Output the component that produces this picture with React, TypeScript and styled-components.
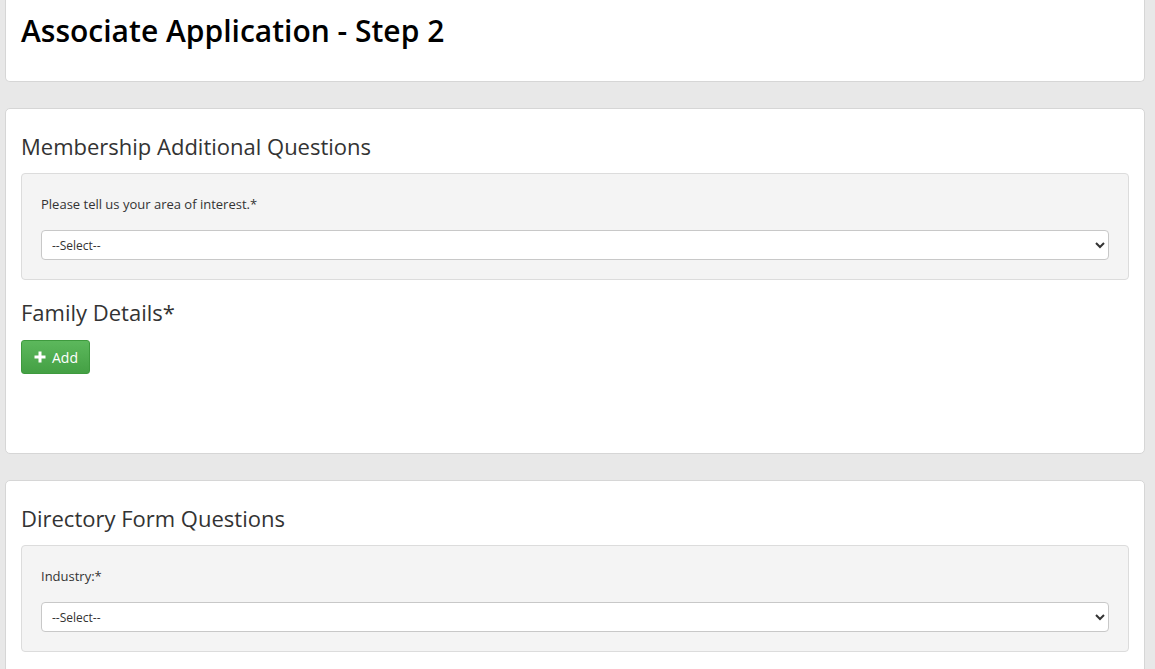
import React from "react";
import styled, { createGlobalStyle } from "styled-components";

const Global = createGlobalStyle`
  html, body { margin: 0; padding: 0; background: #e8e8e8; }
  body { font-family: "Open Sans", "Liberation Sans", sans-serif; color: #333; }
  * { box-sizing: border-box; }
`;

const Page = styled.div`
  display: flex;
  flex-direction: column;
  gap: 26px;
  padding: 0 10px 40px 5px;
`;

const Card = styled.section<{ $top?: boolean }>`
  background: #fff;
  border: 1px solid #d6d6d6;
  border-radius: ${(p) => (p.$top ? "0 0 5px 5px" : "5px")};
  border-top: ${(p) => (p.$top ? "none" : "1px solid #d6d6d6")};
  padding: ${(p) => (p.$top ? "14px 15px 34px" : "25px 15px 15px")};
`;

const Title = styled.h1`
  margin: 0;
  font-size: 30px;
  font-weight: 600;
  line-height: 33px;
  color: #000;
`;

const Heading = styled.h3<{ $gap?: number }>`
  margin: 0 0 ${(p) => p.$gap ?? 15}px;
  font-size: 22px;
  font-weight: 400;
  line-height: 24px;
  color: #333;
`;

const Well = styled.div`
  background: #f4f4f4;
  border: 1px solid #dcdcdc;
  border-radius: 4px;
  padding: 21px 19px 19px;
  margin-bottom: 20px;
`;

const Label = styled.label`
  display: block;
  font-size: 13px;
  line-height: 18px;
  color: #333;
  margin-bottom: 17px;
`;

const Select = styled.select`
  display: block;
  width: 100%;
  height: 30px;
  padding: 0 6px;
  font-family: "Open Sans", "Liberation Sans", sans-serif;
  font-size: 12px;
  color: #333;
  background-color: #fff;
  border: 1px solid #c8c8c8;
  border-radius: 4px;
`;

const AddButton = styled.button`
  display: inline-flex;
  align-items: center;
  gap: 6px;
  height: 34px;
  padding: 0 11px 0 12px;
  font-family: "Open Sans", "Liberation Sans", sans-serif;
  font-size: 14px;
  color: #fff;
  background: linear-gradient(#5cb85c, #44a044);
  border: 1px solid #3e9a3e;
  border-radius: 3px;
  cursor: pointer;
`;

const Spacer = styled.div`
  height: 64px;
`;

const Plus = () => (
  <svg width="12" height="12" viewBox="0 0 12 12" aria-hidden="true">
    <path d="M4.5 0.5h3v4h4v3h-4v4h-3v-4h-4v-3h4z" fill="#fff" />
  </svg>
);

const Field = ({ label }: { label: string }) => (
  <Well>
    <Label>{label}</Label>
    <Select defaultValue="">
      <option value="">--Select--</option>
    </Select>
  </Well>
);

export default function App() {
  return (
    <>
      <Global />
      <Page>
        <Card $top>
          <Title>Associate Application - Step 2</Title>
        </Card>
        <Card>
          <Heading>Membership Additional Questions</Heading>
          <Field label="Please tell us your area of interest.*" />
          <Heading $gap={16}>Family Details*</Heading>
          <AddButton type="button">
            <Plus />
            Add
          </AddButton>
          <Spacer />
        </Card>
        <Card>
          <Heading>Directory Form Questions</Heading>
          <Field label="Industry:*" />
        </Card>
      </Page>
    </>
  );
}
